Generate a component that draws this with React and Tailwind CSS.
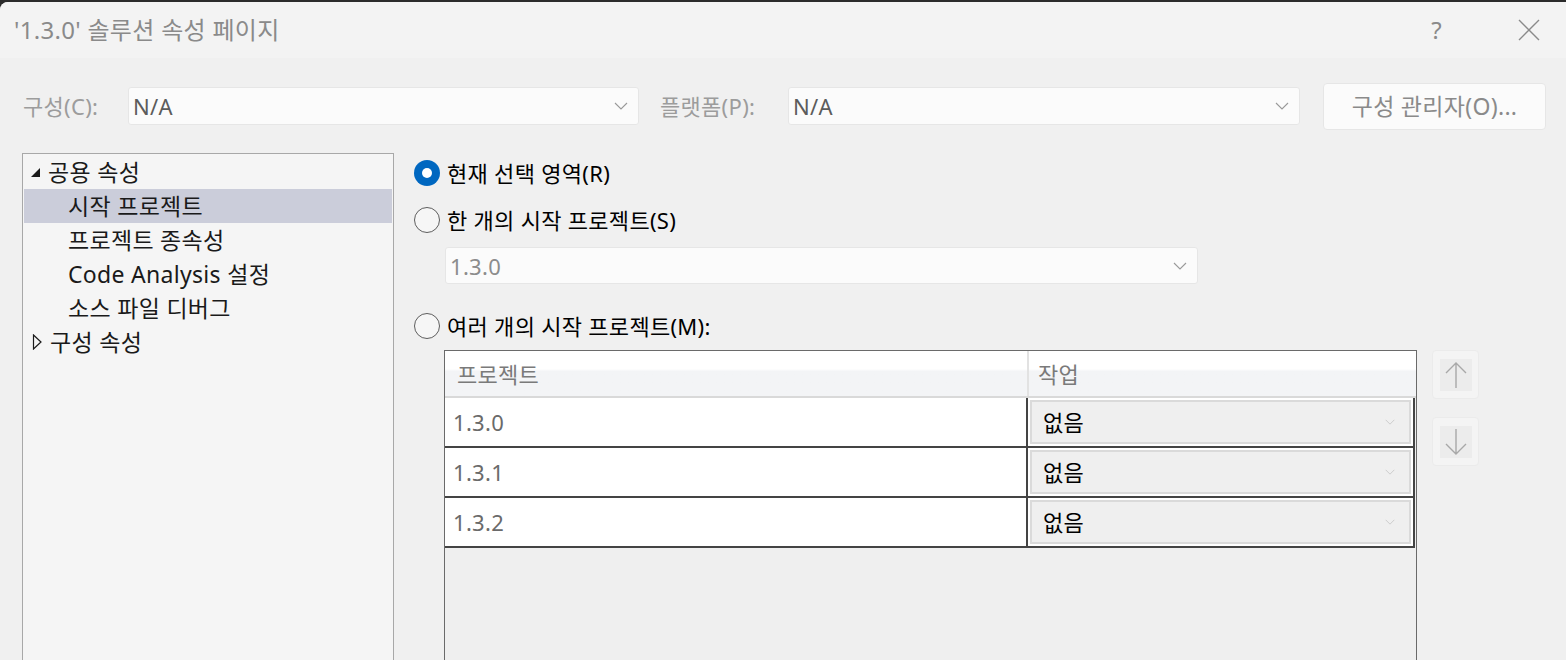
import React from 'react';

const FONT = "font-['Noto_Sans','Noto_Sans_CJK_KR',sans-serif] tracking-[0.3px]";

const Chevron = ({ color = '#9a9a9a', w = 14 }) => (
    <svg width={w} height={w / 2 + 1} viewBox="0 0 14 8" fill="none">
        <path d="M1 1 L7 7 L13 1" stroke={color} strokeWidth="1.1" />
    </svg>
);

const Combo = ({ value, width, height, textColor = 'text-[#5c5c5c]' }) => (
    <div className={`flex items-center justify-between bg-[#fbfbfb] border border-[#e6e6e6] rounded-[3px] pl-[4px] pr-[10px] ${width} ${height}`}>
        <span className={`text-[22px] leading-none ${textColor}`}>{value}</span>
        <Chevron />
    </div>
);

const Radio = ({ checked, label }) => (
    <div className="flex items-center gap-[7px]">
        {checked ? (
            <div className="w-[26px] h-[26px] rounded-full bg-[#0067c0] flex items-center justify-center">
                <div className="w-[10px] h-[10px] rounded-full bg-white" />
            </div>
        ) : (
            <div className="w-[26px] h-[26px] rounded-full border-[1.5px] border-[#5e5e5e] bg-[#f6f6f6]" />
        )}
        <span className="text-[22px] text-black leading-none">{label}</span>
    </div>
);

const TreeItem = ({ children, selected, indent, arrow }) => (
    <div className={`h-[34px] flex items-center ${selected ? 'bg-[#cbcdda]' : ''} ${indent ? 'pl-[44px]' : 'pl-[6px]'}`}>
        {arrow === 'open' && (
            <svg width="12" height="12" viewBox="0 0 12 12" className="mr-[6px] mt-[2px]">
                <path d="M10 1 L10 10 L1 10 Z" fill="#1a1a1a" />
            </svg>
        )}
        {arrow === 'closed' && (
            <svg width="12" height="16" viewBox="0 0 12 16" className="mr-[6px] ml-[2px]">
                <path d="M1.5 1 L9 8 L1.5 15 Z" fill="none" stroke="#1a1a1a" strokeWidth="1.2" />
            </svg>
        )}
        <span className="text-[23px] text-[#1a1a1a] leading-none">{children}</span>
    </div>
);

const ActionCell = () => (
    <div className="flex-1 p-[2px] bg-white">
        <div className="h-full flex items-center justify-between bg-[#efefef] border-2 border-[#dadada] pl-[11px] pr-[14px]">
            <span className="text-[22px] text-black leading-none">없음</span>
            <Chevron color="#c4c4c4" w={10} />
        </div>
    </div>
);

const rows = ['1.3.0', '1.3.1', '1.3.2'];

const ArrowButton = ({ up }) => (
    <div className="w-[47px] h-[49px] bg-[#f4f4f4] border border-[#ebebeb] rounded-[4px] flex items-center justify-center">
        <div className="w-[32px] h-[32px] bg-[#ececec] flex items-center justify-center">
            <svg width="24" height="28" viewBox="0 0 24 28" fill="none">
                {up ? (
                    <path d="M12 27 V2 M2 12 L12 2 L22 12" stroke="#a8a8a8" strokeWidth="1.4" />
                ) : (
                    <path d="M12 1 V26 M2 16 L12 26 L22 16" stroke="#a8a8a8" strokeWidth="1.4" />
                )}
            </svg>
        </div>
    </div>
);

export default function App() {
    return (
        <div className={`w-[1566px] h-[660px] overflow-hidden bg-[#2b2b2b] pt-[2px] ${FONT}`}>
            <div className="h-full bg-[#f0f0f0] rounded-tl-[8px] overflow-hidden">
                {/* title bar */}
                <div className="h-[56px] bg-[#f3f3f3] flex items-center pl-[14px] pr-[26px]">
                    <span className="text-[24px] text-[#8a8a8a] leading-none">'1.3.0' 솔루션 속성 페이지</span>
                    <span className="ml-auto text-[24px] text-[#8a8a8a] leading-none mr-[76px]">?</span>
                    <svg width="22" height="22" viewBox="0 0 22 22">
                        <path d="M1 1 L21 21 M21 1 L1 21" stroke="#8a8a8a" strokeWidth="1.4" />
                    </svg>
                </div>

                {/* configuration row */}
                <div className="flex items-center h-[48px] mt-[24px] pl-[23px]">
                    <span className="text-[22px] text-[#9c9c9c] w-[105px] leading-none">구성(C):</span>
                    <Combo value="N/A" width="w-[511px]" height="h-[38px]" />
                    <span className="text-[22px] text-[#9c9c9c] ml-[21px] w-[128px] leading-none">플랫폼(P):</span>
                    <Combo value="N/A" width="w-[512px]" height="h-[38px]" />
                    <div className="ml-[23px] w-[223px] h-[47px] bg-[#fbfbfb] border border-[#e6e6e6] rounded-[4px] flex items-center justify-center">
                        <span className="text-[23px] text-[#8a8a8a] leading-none">구성 관리자(O)...</span>
                    </div>
                </div>

                {/* main */}
                <div className="flex mt-[23px] pl-[22px]">
                    <div className="w-[372px] h-[520px] bg-[#f5f5f5] border border-[#a8a8a8] p-[1px]">
                        <TreeItem arrow="open">공용 속성</TreeItem>
                        <TreeItem indent selected>시작 프로젝트</TreeItem>
                        <TreeItem indent>프로젝트 종속성</TreeItem>
                        <TreeItem indent>Code Analysis 설정</TreeItem>
                        <TreeItem indent>소스 파일 디버그</TreeItem>
                        <TreeItem arrow="closed">구성 속성</TreeItem>
                    </div>

                    <div className="ml-[20px] flex flex-col">
                        <div className="h-[40px] flex items-center">
                            <Radio checked label="현재 선택 영역(R)" />
                        </div>
                        <div className="h-[54px] flex items-center">
                            <Radio label="한 개의 시작 프로젝트(S)" />
                        </div>
                        <div className="pl-[31px]">
                            <Combo value="1.3.0" width="w-[753px]" height="h-[37px]" textColor="text-[#8c8c8c]" />
                        </div>
                        <div className="pt-[29px] pb-[11px]">
                            <Radio label="여러 개의 시작 프로젝트(M):" />
                        </div>
                        <div className="flex gap-[15px] pl-[30px]">
                            <div className="w-[973px] h-[320px] border border-[#6a6a6a] bg-[#efefef] flex flex-col">
                                <div className="h-[47px] flex border-b-2 border-[#d9d9d9] bg-gradient-to-b from-white from-40% to-[#f3f4f6] to-45%">
                                    <div className="w-[584px] flex items-center pl-[12px] border-r-2 border-[#e2e2e2]">
                                        <span className="text-[22px] text-[#7a7a7a] leading-none">프로젝트</span>
                                    </div>
                                    <div className="flex-1 flex items-center pl-[9px]">
                                        <span className="text-[22px] text-[#7a7a7a] leading-none">작업</span>
                                    </div>
                                </div>
                                <div className="w-[970px] border-r-2 border-[#444]">
                                    {rows.map((r) => (
                                        <div key={r} className="h-[50px] flex border-b-2 border-[#444]">
                                            <div className="w-[583px] bg-white flex items-center pl-[8px] border-r-2 border-[#444]">
                                                <span className="text-[22px] text-[#6a6a6a] leading-none">{r}</span>
                                            </div>
                                            <ActionCell />
                                        </div>
                                    ))}
                                </div>
                            </div>
                            <div className="flex flex-col gap-[18px]">
                                <ArrowButton up />
                                <ArrowButton />
                            </div>
                        </div>
                    </div>
                </div>
            </div>
        </div>
    );
}
